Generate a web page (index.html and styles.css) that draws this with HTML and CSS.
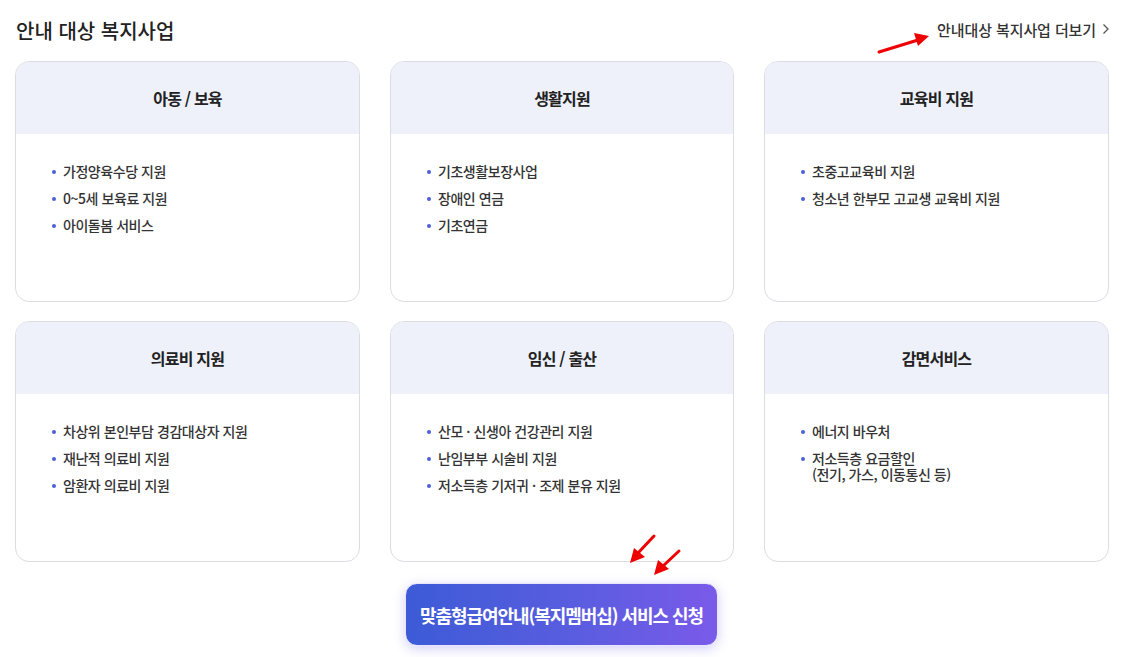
FILE: index.html
```html
<!DOCTYPE html>
<html lang="ko">
<head>
<meta charset="utf-8">
<link rel="stylesheet" href="styles.css">
</head>
<body>
<div class="wrap">
  <div class="top">
    <h2 class="title">안내 대상 복지사업</h2>
    <a class="more" href="#">안내대상 복지사업 더보기 <svg class="chev" width="8" height="12" viewBox="0 0 8 12"><path d="M1.5 1.5 L6 6 L1.5 10.5" fill="none" stroke="#555" stroke-width="1.3"/></svg></a>
  </div>
  <div class="grid">
    <div class="card">
      <div class="card-head">아동 / 보육</div>
      <ul class="list">
        <li>가정양육수당 지원</li>
        <li>0~5세 보육료 지원</li>
        <li>아이돌봄 서비스</li>
      </ul>
    </div>
    <div class="card">
      <div class="card-head">생활지원</div>
      <ul class="list">
        <li>기초생활보장사업</li>
        <li>장애인 연금</li>
        <li>기초연금</li>
      </ul>
    </div>
    <div class="card">
      <div class="card-head">교육비 지원</div>
      <ul class="list">
        <li>초중고교육비 지원</li>
        <li>청소년 한부모 고교생 교육비 지원</li>
      </ul>
    </div>
    <div class="card">
      <div class="card-head">의료비 지원</div>
      <ul class="list">
        <li>차상위 본인부담 경감대상자 지원</li>
        <li>재난적 의료비 지원</li>
        <li>암환자 의료비 지원</li>
      </ul>
    </div>
    <div class="card">
      <div class="card-head">임신 / 출산</div>
      <ul class="list">
        <li>산모 · 신생아 건강관리 지원</li>
        <li>난임부부 시술비 지원</li>
        <li>저소득층 기저귀 · 조제 분유 지원</li>
      </ul>
    </div>
    <div class="card">
      <div class="card-head">감면서비스</div>
      <ul class="list">
        <li>에너지 바우처</li>
        <li>저소득층 요금할인<br>(전기, 가스, 이동통신 등)</li>
      </ul>
    </div>
  </div>
  <div class="btn-row">
    <a class="apply" href="#">맞춤형급여안내(복지멤버십) 서비스 신청</a>
  </div>
</div>
<svg class="annot" width="1140" height="657" viewBox="0 0 1140 657">
  <g stroke="#ee0000" stroke-width="3" fill="#ee0000" stroke-linecap="round">
    <line x1="879" y1="52" x2="918" y2="40"/>
    <polygon points="929,36 914,33 918,46" stroke="none"/>
    <line x1="654" y1="536" x2="638" y2="553"/>
    <polygon points="630,563 634,548 645,557" stroke="none"/>
    <line x1="679" y1="551" x2="663" y2="566"/>
    <polygon points="654,575 658,560 669,569" stroke="none"/>
  </g>
</svg>
</body>
</html>
```

FILE: styles.css
```css
* { box-sizing: border-box; }
html, body { margin: 0; padding: 0; background: #fff; }
body {
  font-family: "Noto Sans CJK KR", "Noto Sans", sans-serif;
  color: #222;
  position: relative;
  width: 1140px;
  height: 657px;
  overflow: hidden;
}
.wrap {
  width: 1095px;
  margin-left: 15px;
  padding-top: 14px;
}
.top {
  display: flex;
  justify-content: space-between;
  align-items: center;
  height: 32px;
  margin-bottom: 15px;
}
.title {
  margin: 0 0 0 1px;
  font-size: 20px;
  font-weight: 500;
  letter-spacing: 0;
  color: #222;
}
.more {
  display: flex;
  align-items: center;
  gap: 5px;
  font-size: 15px;
  font-weight: 500;
  letter-spacing: -0.1px;
  color: #333;
  text-decoration: none;
  margin-top: -2px;
}
.chev { margin-left: 1px; }
.grid {
  display: grid;
  grid-template-columns: 345px 344px 345px;
  grid-auto-rows: 241px;
  column-gap: 30px;
  row-gap: 19px;
}
.card {
  border: 1px solid #dcdde3;
  border-radius: 14px;
  overflow: hidden;
  background: #fff;
}
.card-head {
  height: 72px;
  background: #eef1fa;
  display: flex;
  align-items: center;
  justify-content: center;
  font-size: 16px;
  font-weight: 700;
  letter-spacing: -0.8px;
  color: #222;
  padding-bottom: 1px;
}
.list {
  list-style: none;
  margin: 0;
  padding: 29px 0 0 47px;
}
.list li {
  position: relative;
  font-size: 14px;
  font-weight: 500;
  line-height: 16px;
  letter-spacing: -0.45px;
  color: #333;
  margin-bottom: 11px;
}
.list li::before {
  content: "";
  position: absolute;
  left: -11px;
  top: 7px;
  width: 4px;
  height: 4px;
  border-radius: 50%;
  background: #4d5fd6;
}
.btn-row {
  display: flex;
  justify-content: center;
  padding-top: 21px;
}
.apply {
  display: flex;
  align-items: center;
  justify-content: center;
  width: 313px;
  height: 63px;
  margin-left: -2px;
  border-radius: 12px;
  background: linear-gradient(90deg, #3d5bd7 0%, #5a5ddf 55%, #7a5ae9 100%);
  box-shadow: 0 3px 12px rgba(110, 100, 230, 0.3);
  border: 1px solid #e8e6fb;
  color: #fff;
  font-size: 18px;
  font-weight: 700;
  letter-spacing: -1.05px;
  text-decoration: none;
}
.annot {
  position: absolute;
  left: 0;
  top: 0;
  pointer-events: none;
}
```
